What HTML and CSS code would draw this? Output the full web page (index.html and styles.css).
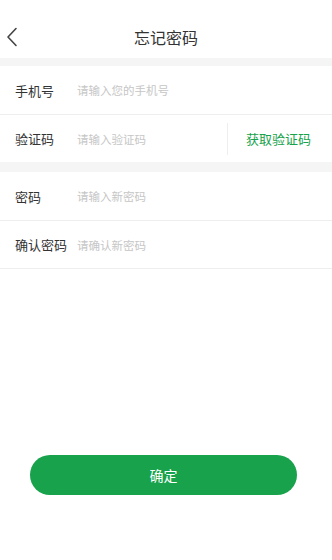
FILE: index.html
```html
<!DOCTYPE html>
<html lang="zh-CN">
<head>
    <meta charset="UTF-8">
    <meta name="viewport" content="width=device-width, initial-scale=1.0">
    <title>忘记密码</title>
    <link rel="stylesheet" href="styles.css">
</head>
<body>
    <div class="page">
        <div class="nav-bar">
            <div class="back-btn">
                <svg width="12" height="20" viewBox="0 0 12 20"><path d="M10 1.5 L2 10 L10 18.5" fill="none" stroke="#444" stroke-width="1.6" stroke-linecap="round" stroke-linejoin="round"/></svg>
            </div>
            <div class="nav-title">忘记密码</div>
        </div>

        <div class="form-group">
            <div class="form-row">
                <span class="form-label">手机号</span>
                <input type="text" class="form-input" placeholder="请输入您的手机号">
            </div>
            <div class="form-row">
                <span class="form-label">验证码</span>
                <input type="text" class="form-input" placeholder="请输入验证码">
                <div class="code-btn">获取验证码</div>
            </div>
        </div>

        <div class="form-group form-group-last">
            <div class="form-row">
                <span class="form-label">密码</span>
                <input type="password" class="form-input" placeholder="请输入新密码">
            </div>
            <div class="form-row">
                <span class="form-label">确认密码</span>
                <input type="password" class="form-input" placeholder="请确认新密码">
            </div>
        </div>

        <div class="submit-wrap">
            <button class="submit-btn">确定</button>
        </div>
    </div>
</body>
</html>
```

FILE: styles.css
```css
* { margin: 0; padding: 0; box-sizing: border-box; }
:root {
    --green: #17a24b;
    --text: #333333;
    --placeholder: #c6c6c6;
    --line: #eeeeee;
    --gap-bg: #f5f5f5;
}
body { background: #ffffff; color: var(--text); font-family: "Noto Sans CJK SC", "Noto Sans", sans-serif; }
.page { min-height: 560px; display: flex; flex-direction: column; }

.nav-bar { position: relative; height: 66px; padding-top: 20px; display: flex; align-items: center; justify-content: center; border-bottom: 8px solid var(--gap-bg); }
.back-btn { position: absolute; left: 6px; top: 27px; width: 12px; height: 20px; }
.back-btn svg { display: block; }
.nav-title { font-size: 16px; color: #333; margin-top: -5px; }

.form-group { border-bottom: 10px solid var(--gap-bg); }
.form-group-last { border-bottom: 1px solid var(--line); }
.form-row { display: flex; align-items: center; height: 48px; padding-left: 15px; }
.form-row + .form-row { border-top: 1px solid var(--line); }
.form-label { width: 62px; flex-shrink: 0; font-size: 13px; color: var(--text); }
.form-input { flex: 1; min-width: 0; border: none; outline: none; background: transparent; font-family: inherit; font-size: 11.5px; color: var(--text); }
.form-input::placeholder { color: var(--placeholder); }
.code-btn { height: 32px; display: flex; align-items: center; padding: 0 21px 0 18px; border-left: 1px solid var(--line); font-size: 13px; color: var(--green); }

.submit-wrap { margin-top: auto; padding: 0 35px 65px 30px; }
.submit-btn { width: 100%; height: 40px; border: none; border-radius: 20px; background: var(--green); color: #ffffff; font-family: inherit; font-size: 14px; }
```
